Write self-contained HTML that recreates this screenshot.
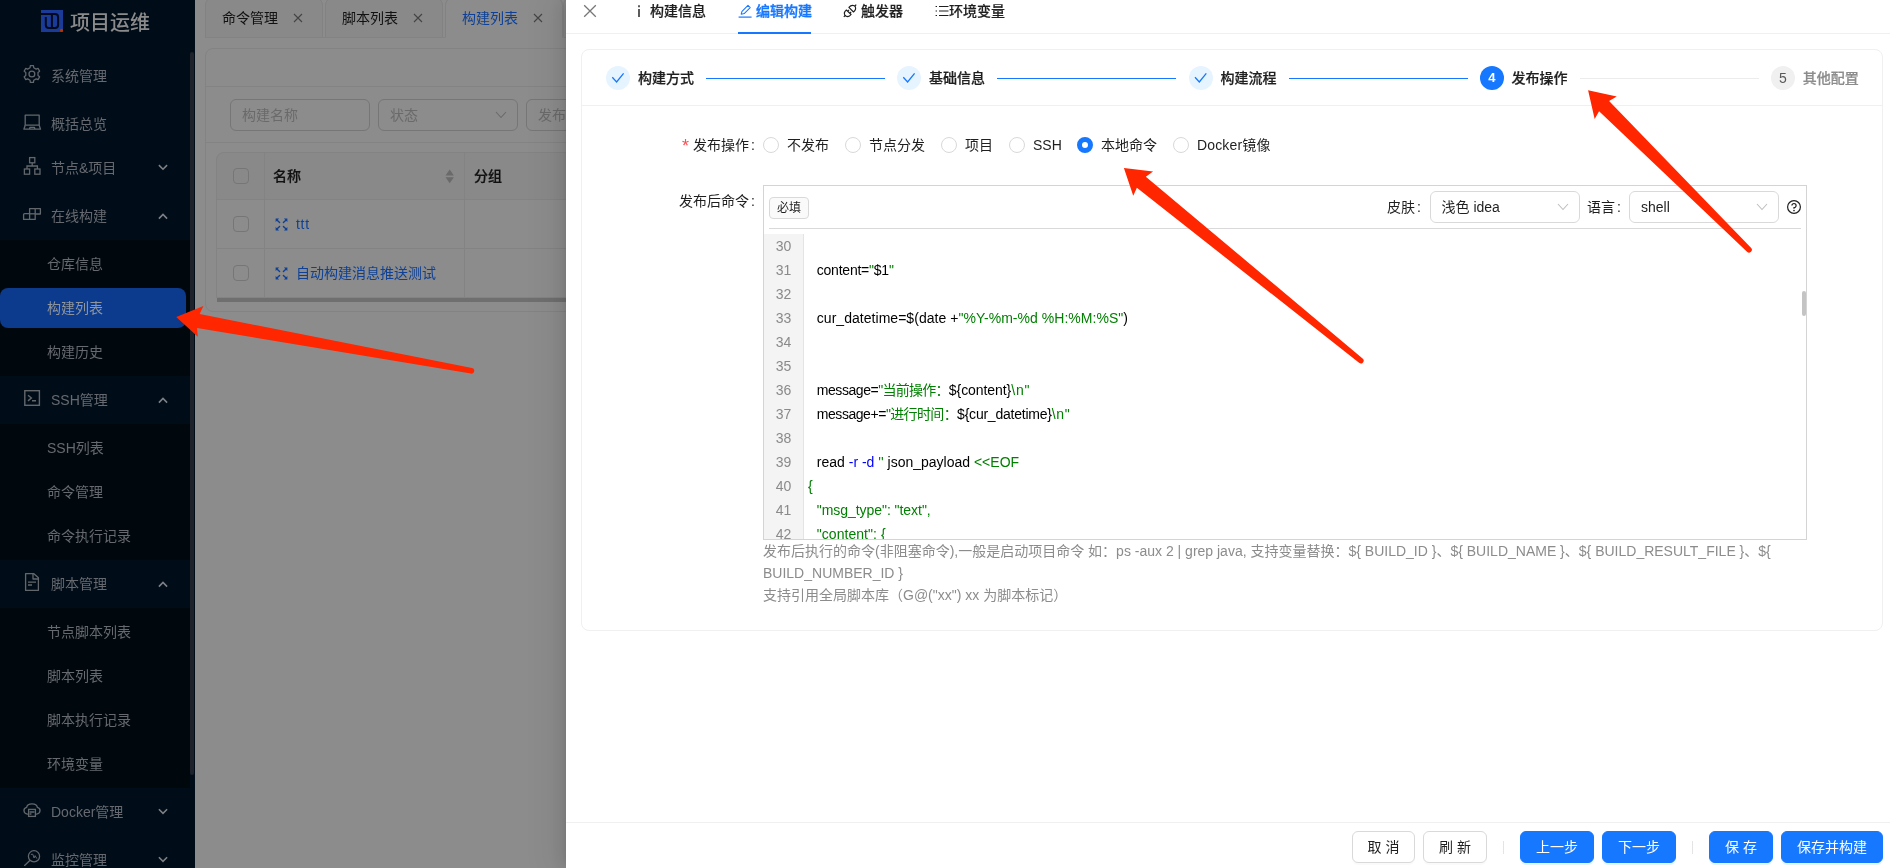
<!DOCTYPE html>
<html lang="zh-CN"><head><meta charset="utf-8"><title>项目运维 - 编辑构建</title>
<style>
*{box-sizing:border-box;margin:0;padding:0}
html,body{width:1890px;height:868px;overflow:hidden;background:#8c8c8c}
body{font-family:"Liberation Sans","Noto Sans CJK SC",sans-serif;font-size:14px;line-height:22px;color:#1f1f1f;position:relative}
.abs{position:absolute}
#side,#main,#drawer{will-change:transform}
#side{position:absolute;left:0;top:0;width:195px;height:868px;background:#000c17;overflow:hidden}
.subbg{position:absolute;left:0;width:190px;background:#00070d}
.sel{position:absolute;left:0;top:288px;width:186px;height:40px;border-radius:8px;background:#0c3a8c}
.mi{position:absolute;white-space:nowrap;color:#666a70;font-size:14px;line-height:22px}
.mi.on{color:#8f959c}
.title{position:absolute;left:70px;top:7.5px;font-size:20px;line-height:30px;font-weight:500;color:#8b8b8b;white-space:nowrap}
.thumb{position:absolute;left:190px;top:52px;width:4px;height:723px;border-radius:2px;background:#1e222a}
#main{position:absolute;left:195px;top:0;width:371px;height:868px;background:#8c8c8c;overflow:hidden;color:#111}
.tab{position:absolute;top:-3px;height:41px;width:118px;border:1px solid #828282;border-radius:8px 8px 0 0;background:#898989;font-size:14px;line-height:22px;white-space:nowrap}
.tab span{position:absolute;left:16px;top:9px}
.tab svg{position:absolute;left:87px;top:15px}
.tab.act{background:#8c8c8c;border-bottom-color:#8c8c8c;color:#0d4096}
.card{position:absolute;left:10px;top:48px;width:400px;height:264px;border:1px solid #838383;border-radius:8px}
.hl{position:absolute;background:#838383;height:1px}
.vl{position:absolute;background:#838383;width:1px}
.inp{position:absolute;top:99px;height:32px;width:140px;border:1px solid #767676;border-radius:6px;color:#6a6a6a;padding:4px 11px;white-space:nowrap;overflow:hidden}
.cb{position:absolute;left:38px;width:16px;height:16px;border:1px solid #767676;border-radius:4px}
.th{position:absolute;font-weight:500;-webkit-text-stroke:0.22px #111;color:#111;white-space:nowrap}
.lnk{position:absolute;color:#0d4096;white-space:nowrap}
#drawer{position:absolute;left:566px;top:0;width:1324px;height:868px;background:#fff;box-shadow:-6px 0 16px rgba(0,0,0,.08),-3px 0 6px -4px rgba(0,0,0,.12),-9px 0 28px 8px rgba(0,0,0,.05)}
#drawer .t{position:absolute;white-space:nowrap}
.dtab{position:absolute;top:0;font-weight:500;-webkit-text-stroke:0.18px currentColor;color:#1f1f1f;white-space:nowrap;line-height:22px}
.step-ic{position:absolute;top:66px;width:24px;height:24px;border-radius:50%;background:#e6f4ff}
.step-t{position:absolute;top:67px;font-weight:500;-webkit-text-stroke:0.22px currentColor;color:#1f1f1f;white-space:nowrap;font-size:14px;line-height:22px}
.radio{position:absolute;top:137px;width:16px;height:16px;border:1px solid #d9d9d9;border-radius:50%;background:#fff}
.rl{position:absolute;top:134px;white-space:nowrap;color:#1f1f1f}
.sel2{position:absolute;top:191px;height:32px;width:150px;border:1px solid #d9d9d9;border-radius:6px;background:#fff;padding:4px 11px;white-space:nowrap}
.ln{position:absolute;left:0;width:39px;text-align:center;height:24px;line-height:24px;color:#8a8a8a;font-size:14px}
.cl{position:absolute;left:0;height:24px;line-height:24px;white-space:pre;color:#000;font-size:14px}
.btn{position:absolute;top:831px;height:32px;border-radius:6px;font-size:14px;line-height:30px;text-align:center;white-space:nowrap}
.btn.d{border:1px solid #d9d9d9;background:#fff;color:#1f1f1f;box-shadow:0 2px 0 rgba(0,0,0,.02)}
.btn.p{border:1px solid #1677ff;background:#1677ff;color:#fff;box-shadow:0 2px 0 rgba(5,145,255,.1)}
</style></head><body>

<div id="side">
<svg class="abs" style="left:41px;top:10px" width="22" height="22" viewBox="0 0 22 22"><rect width="22" height="22.2" fill="#1a3b98"/><path d="M0 3.9 H14 Q17.1 3.9 17.1 7 V14.9 Q17.1 18 14 18 H7.9 Q4.8 18 4.8 14.9 V7" fill="none" stroke="#010a1c" stroke-width="2"/><path d="M10.9 4 V18" stroke="#010a1c" stroke-width="2"/><circle cx="20.5" cy="20.4" r="1.6" fill="#b23505"/></svg>
<div class="title">项目运维</div>
<div class="subbg" style="top:240px;height:136px"></div>
<div class="subbg" style="top:424px;height:136px"></div>
<div class="subbg" style="top:608px;height:180px"></div>
<div class="sel"></div>
<div class="mi" style="top:64.5px;left:51px">系统管理</div>
<div class="mi" style="top:112.5px;left:51px">概括总览</div>
<div class="mi" style="top:156.5px;left:51px">节点&amp;项目</div>
<div class="mi" style="top:204.5px;left:51px">在线构建</div>
<div class="mi" style="top:388.5px;left:51px">SSH管理</div>
<div class="mi" style="top:572.5px;left:51px">脚本管理</div>
<div class="mi" style="top:800.5px;left:51px">Docker管理</div>
<div class="mi" style="top:848.5px;left:51px">监控管理</div>
<div class="mi" style="top:252.5px;left:47px">仓库信息</div>
<div class="mi on" style="top:296.5px;left:47px">构建列表</div>
<div class="mi" style="top:340.5px;left:47px">构建历史</div>
<div class="mi" style="top:436.5px;left:47px">SSH列表</div>
<div class="mi" style="top:480.5px;left:47px">命令管理</div>
<div class="mi" style="top:524.5px;left:47px">命令执行记录</div>
<div class="mi" style="top:620.5px;left:47px">节点脚本列表</div>
<div class="mi" style="top:664.5px;left:47px">脚本列表</div>
<div class="mi" style="top:708.5px;left:47px">脚本执行记录</div>
<div class="mi" style="top:752.5px;left:47px">环境变量</div>
<svg class="abs" style="left:0;top:0" width="195" height="868" viewBox="0 0 195 868"><path d="M29.97 67.69 L30.26 65.56 L33.54 65.56 L33.83 67.69 L36.40 69.17 L38.39 68.36 L40.03 71.20 L38.33 72.52 L38.33 75.48 L40.03 76.80 L38.39 79.64 L36.40 78.83 L33.83 80.31 L33.54 82.44 L30.26 82.44 L29.97 80.31 L27.40 78.83 L25.41 79.64 L23.77 76.80 L25.47 75.48 L25.47 72.52 L23.77 71.20 L25.41 68.36 L27.40 69.17Z" fill="none" stroke="#62676c" stroke-width="1.3" stroke-linejoin="round" transform="translate(31.9 0) scale(0.95 1) translate(-31.9 0)"/><circle cx="31.9" cy="74.0" r="2.9" fill="none" stroke="#62676c" stroke-width="1.3"/><g fill="none" stroke="#62676c" stroke-width="1.3" stroke-linejoin="round"><rect x="25.2" y="115.2" width="14" height="10"/><path d="M25.2 125.2 L23.9 129.2 H40.5 L39.2 125.2 M29.5 129 L30 127.3 H34.4 L34.9 129"/></g><g fill="none" stroke="#62676c" stroke-width="1.3"><rect x="29.6" y="157.6" width="5.2" height="5.2"/><rect x="24.4" y="169" width="5.2" height="5.2"/><rect x="34.8" y="169" width="5.2" height="5.2"/><path d="M32.2 162.8 V166 M27 169 V166 H37.4 V169"/></g><g fill="none" stroke="#62676c" stroke-width="1.3" stroke-linejoin="round"><path d="M29.6 213.6 H24.6 Q23.6 213.6 23.6 214.6 V219.4 H29.6"/><rect x="29.6" y="208.6" width="5.6" height="10.8"/><path d="M29.6 213.8 H35.2"/><path d="M35.2 208.6 H40.4 V214 H35.2"/></g><g fill="none" stroke="#62676c" stroke-width="1.4"><rect x="24.8" y="390.7" width="14.6" height="14.6"/><path d="M28 395.2 L31.4 398 L28 400.9 M32 400.8 H36"/></g><g fill="none" stroke="#62676c" stroke-width="1.3" stroke-linejoin="round"><path d="M25.6 573.6 H33.6 L38.4 577.8 V590.4 H25.6 Z"/><path d="M33 574 V579 H38"/><path d="M28 582.2 H36 M28 585 H32"/></g><g fill="none" stroke="#62676c" stroke-width="1.3" stroke-linecap="round"><path d="M27.4 814.2 C23.4 813.6 22.6 808.6 26.6 807.4 C27.4 802.6 36.6 802.6 37.4 807.4 C41.4 808.6 40.6 813.6 36.6 814.2"/><rect x="28.6" y="809.4" width="6.8" height="7"/><path d="M30 812 H34 M30 814 H31"/></g><g fill="none" stroke="#62676c" stroke-width="1.3" stroke-linecap="round"><circle cx="34" cy="856.3" r="5.6"/><path d="M29.8 860.6 L24.6 865.4"/><path d="M31.3 854.4 L32.8 854.2 L34.1 858 L35.1 855.6 L36.6 858.2" stroke-width="1"/></g><path d="M158.9 165.1 L163 169.2 L167.1 165.1" fill="none" stroke="#7d8186" stroke-width="1.6"/><path d="M158.9 218.6 L163 214.5 L167.1 218.6" fill="none" stroke="#7d8186" stroke-width="1.6"/><path d="M158.9 402.6 L163 398.5 L167.1 402.6" fill="none" stroke="#7d8186" stroke-width="1.6"/><path d="M158.9 586.6 L163 582.5 L167.1 586.6" fill="none" stroke="#7d8186" stroke-width="1.6"/><path d="M158.9 809.1999999999999 L163 813.3 L167.1 809.1999999999999" fill="none" stroke="#7d8186" stroke-width="1.6"/><path d="M158.9 857.1999999999999 L163 861.3 L167.1 857.1999999999999" fill="none" stroke="#7d8186" stroke-width="1.6"/></svg>
<div class="thumb"></div>
</div>

<div id="main">
 <div class="tab" style="left:10px"><span>命令管理</span><svg width="10" height="10" viewBox="0 0 10 10"><path d="M1 1L9 9M9 1L1 9" stroke="#444" stroke-width="1.1"/></svg></div>
 <div class="tab" style="left:130px"><span>脚本列表</span><svg width="10" height="10" viewBox="0 0 10 10"><path d="M1 1L9 9M9 1L1 9" stroke="#444" stroke-width="1.1"/></svg></div>
 <div class="tab act" style="left:250px"><span>构建列表</span><svg width="10" height="10" viewBox="0 0 10 10"><path d="M1 1L9 9M9 1L1 9" stroke="#444" stroke-width="1.1"/></svg></div>
 <div class="tab" style="left:368px"></div>
 <div class="hl" style="left:10px;top:37px;width:240px"></div>
 <div class="card"></div>
 <div class="hl" style="left:11px;top:86px;width:360px"></div>
 <div class="inp" style="left:35px">构建名称</div>
 <div class="inp" style="left:183px">状态<svg class="abs" style="left:116px;top:11px" width="12" height="8" viewBox="0 0 12 8"><path d="M1 1L6 6.5L11 1" fill="none" stroke="#6a6a6a" stroke-width="1.1"/></svg></div>
 <div class="inp" style="left:331px">发布</div>
 <div class="hl" style="left:11px;top:142px;width:360px"></div>
 <div class="abs" style="left:21px;top:152px;width:360px;height:47px;background:#898989;border-top-left-radius:8px"></div>
 <div class="abs" style="left:21px;top:152px;width:360px;height:146px;border:1px solid #838383;border-radius:8px 0 0 0"></div>
 <div class="hl" style="left:21px;top:199px;width:360px"></div>
 <div class="hl" style="left:21px;top:248px;width:360px"></div>
 <div class="vl" style="left:69px;top:152px;height:145px"></div>
 <div class="vl" style="left:269px;top:152px;height:145px"></div>
 <div class="abs" style="left:22px;top:298px;width:360px;height:4px;background:#6f6f6f"></div>
 <div class="cb" style="top:168px"></div><div class="cb" style="top:216px"></div><div class="cb" style="top:265px"></div>
 <div class="th" style="left:78px;top:165px">名称</div>
 <div class="th" style="left:279px;top:165px">分组</div>
 <svg class="abs" style="left:250px;top:169px" width="10" height="15" viewBox="0 0 10 15"><path d="M4.7 0.4L8.9 6.4H0.5Z M4.7 14.2L8.9 8.2H0.5Z" fill="#6a6a6a"/></svg>
 <svg class="abs" style="left:79.5px;top:217.5px" width="13" height="13" viewBox="0 0 13 13"><g fill="#0d4096" stroke="#0d4096"><path d="M0.6 0.6 L4.1 0.6 L0.6 4.1Z" stroke="none"/><path d="M4.6 4.6 L1.9 1.9" stroke-width="1.35" stroke-linecap="round" fill="none"/><path d="M0.6 12.4 L4.1 12.4 L0.6 8.9Z" stroke="none"/><path d="M4.6 8.4 L1.9 11.1" stroke-width="1.35" stroke-linecap="round" fill="none"/><path d="M12.4 0.6 L8.9 0.6 L12.4 4.1Z" stroke="none"/><path d="M8.4 4.6 L11.1 1.9" stroke-width="1.35" stroke-linecap="round" fill="none"/><path d="M12.4 12.4 L8.9 12.4 L12.4 8.9Z" stroke="none"/><path d="M8.4 8.4 L11.1 11.1" stroke-width="1.35" stroke-linecap="round" fill="none"/></g></svg>
 <svg class="abs" style="left:79.5px;top:266.5px" width="13" height="13" viewBox="0 0 13 13"><g fill="#0d4096" stroke="#0d4096"><path d="M0.6 0.6 L4.1 0.6 L0.6 4.1Z" stroke="none"/><path d="M4.6 4.6 L1.9 1.9" stroke-width="1.35" stroke-linecap="round" fill="none"/><path d="M0.6 12.4 L4.1 12.4 L0.6 8.9Z" stroke="none"/><path d="M4.6 8.4 L1.9 11.1" stroke-width="1.35" stroke-linecap="round" fill="none"/><path d="M12.4 0.6 L8.9 0.6 L12.4 4.1Z" stroke="none"/><path d="M8.4 4.6 L11.1 1.9" stroke-width="1.35" stroke-linecap="round" fill="none"/><path d="M12.4 12.4 L8.9 12.4 L12.4 8.9Z" stroke="none"/><path d="M8.4 8.4 L11.1 11.1" stroke-width="1.35" stroke-linecap="round" fill="none"/></g></svg>
 <div class="lnk" style="left:101px;top:213px;letter-spacing:0.7px">ttt</div>
 <div class="lnk" style="left:101px;top:262px">自动构建消息推送测试</div>
</div>

<div id="drawer">
 <svg class="abs" style="left:17px;top:4px" width="14" height="14" viewBox="0 0 14 14"><path d="M1.2 1.2L12.8 12.8M12.8 1.2L1.2 12.8" stroke="#777" stroke-width="1.3"/></svg>
 <div class="hl" style="left:0;top:33px;width:1324px;background:#f0f0f0"></div>
 <div class="dtab" style="left:84px">构建信息</div>
 <div class="dtab" style="left:190px;color:#1677ff;-webkit-text-stroke:0.3px #1677ff">编辑构建</div>
 <div class="dtab" style="left:295px">触发器</div>
 <div class="dtab" style="left:383px">环境变量</div>
 <div class="abs" style="left:172px;top:32px;width:73px;height:2px;background:#1677ff"></div>
 <svg class="abs" style="left:60px;top:0" width="400" height="24" viewBox="0 0 400 24">
  <path d="M13 5.3V7.2M13 8.9V17" stroke="#1f1f1f" stroke-width="1.45"/>
  <g fill="none" stroke="#1677ff" stroke-width="1.05" stroke-linejoin="round"><path d="M115.2 14.2L116 11.4L122 5.4L124.2 7.6L118.2 13.6Z"/><path d="M112.6 17.1H125.6" stroke-width="1.2"/></g>
  <g transform="translate(210,0)" fill="none" stroke="#1f1f1f" stroke-width="1.15" stroke-linejoin="round"><path d="M12.9 7.4L17.5 12Q20.6 9.6 19.2 6.6L18.4 5.8Q15.4 4.4 12.9 7.4Z"/><path d="M18.9 6L20.2 4.7"/><path d="M10.4 10L15.1 14.5Q12.8 17.6 9.8 16L8.9 15.1Q7.3 12.4 10.4 10Z"/><path d="M9.2 15.5L7.8 16.9M12 10.9L13 9.9M14.1 13L15.1 12"/></g>
  <g stroke="#1f1f1f" stroke-width="1.2"><path d="M313 6.5H322.5M313 11H322.5M313 15.5H322.5"/><path d="M309.6 6.5H311M309.6 11H311M309.6 15.5H311"/></g>
 </svg>

 <div class="abs" style="left:15px;top:49px;width:1302px;height:582px;border:1px solid #f0f0f0;border-radius:8px"></div>
 <div class="hl" style="left:16px;top:105px;width:1300px;background:#f0f0f0"></div>

 <div class="step-ic" style="left:40px"></div><div class="step-ic" style="left:331px"></div><div class="step-ic" style="left:622.7px"></div>
 <div class="step-ic" style="left:913.8px;background:#1677ff;color:#fff;text-align:center;font-size:13px;line-height:24px;font-weight:bold">4</div>
 <div class="step-ic" style="left:1204.8px;background:#f0f0f0;color:#595959;text-align:center;font-size:14px;line-height:24px">5</div>
 <svg class="abs" style="left:40px;top:66px" width="620" height="24" viewBox="0 0 620 24"><g fill="none" stroke="#1677ff" stroke-width="1.3"><path d="M6.3 11.3L10.6 15.9L17.6 7.3"/><path d="M297.3 11.3L301.6 15.9L308.6 7.3"/><path d="M589 11.3L593.3 15.9L600.3 7.3"/></g></svg>
 <div class="step-t" style="left:72px">构建方式</div>
 <div class="step-t" style="left:363px">基础信息</div>
 <div class="step-t" style="left:654.6px">构建流程</div>
 <div class="step-t" style="left:945.5px">发布操作</div>
 <div class="step-t" style="left:1236.8px;color:#8c8c8c">其他配置</div>
 <div class="hl" style="left:140px;top:78px;width:179px;background:#1677ff"></div>
 <div class="hl" style="left:431px;top:78px;width:179px;background:#1677ff"></div>
 <div class="hl" style="left:723px;top:78px;width:179px;background:#1677ff"></div>
 <div class="hl" style="left:1014px;top:78px;width:179px;background:#ececec"></div>

 <div class="t" style="left:116.1px;top:135.3px;font-size:18px;line-height:22px"><span style="color:#ff4d4f;font-family:'Liberation Sans',sans-serif">*</span></div>
 <div class="t" style="left:127px;top:134px">发布操作<span style="margin-left:2px">:</span></div>
 <div class="radio" style="left:197px"></div><div class="rl" style="left:221px">不发布</div>
 <div class="radio" style="left:279px"></div><div class="rl" style="left:303px">节点分发</div>
 <div class="radio" style="left:375px"></div><div class="rl" style="left:399px">项目</div>
 <div class="radio" style="left:443px"></div><div class="rl" style="left:467px">SSH</div>
 <div class="radio" style="left:511px;border:5px solid #1677ff"></div><div class="rl" style="left:535px">本地命令</div>
 <div class="radio" style="left:607px"></div><div class="rl" style="left:631px;letter-spacing:0.15px">Docker镜像</div>

 <div class="t" style="left:113px;top:190px">发布后命令<span style="margin-left:2px">:</span></div>
 <div class="abs" style="left:197px;top:185px;width:1044px;height:355px;border:1px solid #d4d4d4;overflow:hidden">
   <div class="abs" style="left:5px;top:10.5px;width:40px;height:22px;border:1px solid #d9d9d9;border-radius:4px;background:#fafafa;font-size:12px;line-height:20px;text-align:center;color:#1f1f1f">必填</div>
   <div class="hl" style="left:5px;top:42px;width:1032px;background:#d9d9d9"></div>
   <div class="abs" style="left:0;top:48px;width:40px;height:310px;background:#f4f4f4;border-right:1px solid #e4e4e4"><div class="ln" style="top:0px">30</div><div class="ln" style="top:24px">31</div><div class="ln" style="top:48px">32</div><div class="ln" style="top:72px">33</div><div class="ln" style="top:96px">34</div><div class="ln" style="top:120px">35</div><div class="ln" style="top:144px">36</div><div class="ln" style="top:168px">37</div><div class="ln" style="top:192px">38</div><div class="ln" style="top:216px">39</div><div class="ln" style="top:240px">40</div><div class="ln" style="top:264px">41</div><div class="ln" style="top:288px">42</div></div>
   <div class="abs" style="left:44px;top:48px;width:990px;height:310px"><div class="cl" style="top:24px;left:8.8px"><span style="letter-spacing:-0.23px;">content=</span><span style="letter-spacing:-0.23px;color:#008000;">"</span><span style="letter-spacing:-0.23px;">$1</span><span style="color:#008000;">"</span></div><div class="cl" style="top:72px;left:8.8px"><span style="letter-spacing:0.035px;">cur_datetime=$(date +</span><span style="letter-spacing:0.035px;color:#008000;">"%Y-%m-%d %H:%M:%S"</span>)</div><div class="cl" style="top:144px;left:8.8px"><span style="letter-spacing:-0.44px;">message=</span><span style="letter-spacing:-0.73px;color:#008000;">"当前操作：</span><span style="letter-spacing:-0.07px;">${content}</span><span style="letter-spacing:0.8px;color:#008000;">\n"</span></div><div class="cl" style="top:168px;left:8.8px"><span style="letter-spacing:-0.45px;">message+=</span><span style="letter-spacing:-0.63px;color:#008000;">"进行时间：</span><span style="letter-spacing:-0.23px;">${cur_datetime}</span><span style="letter-spacing:0.7px;color:#008000;">\n"</span></div><div class="cl" style="top:216px;left:8.8px">read <span style="color:#0000ff;">-r</span> <span style="color:#0000ff;">-d</span> <span style="color:#008000;">''</span> json_payload <span style="color:#008000;">&lt;&lt;EOF</span></div><div class="cl" style="top:240px;left:0px"><span style="color:#008000;">{</span></div><div class="cl" style="top:264px;left:8.8px"><span style="letter-spacing:-0.05px;color:#008000;">"msg_type": "text",</span></div><div class="cl" style="top:288px;left:8.8px"><span style="letter-spacing:0.04px;color:#008000;">"content": {</span></div></div>
   <div class="abs" style="left:1038px;top:105px;width:4px;height:25px;border-radius:2px;background:#c4c4c4"></div>
 </div>
 <div class="t" style="left:821px;top:196px">皮肤<span style="margin-left:2px">:</span></div>
 <div class="sel2" style="left:863.5px">浅色 idea<svg class="abs" style="left:126px;top:11px" width="12" height="8" viewBox="0 0 12 8"><path d="M1 1L6 6.5L11 1" fill="none" stroke="#bfbfbf" stroke-width="1.1"/></svg></div>
 <div class="t" style="left:1021px;top:196px">语言<span style="margin-left:2px">:</span></div>
 <div class="sel2" style="left:1063px">shell<svg class="abs" style="left:126px;top:11px" width="12" height="8" viewBox="0 0 12 8"><path d="M1 1L6 6.5L11 1" fill="none" stroke="#bfbfbf" stroke-width="1.1"/></svg></div>
 <svg class="abs" style="left:1220px;top:199px" width="16" height="16" viewBox="0 0 16 16"><circle cx="8" cy="8" r="6.4" fill="none" stroke="#1f1f1f" stroke-width="1.2"/><path d="M5.9 6.6A2.1 2.1 0 1 1 8 8.7V9.8" fill="none" stroke="#1f1f1f" stroke-width="1.2"/><circle cx="8" cy="11.6" r="0.8" fill="#1f1f1f"/></svg>

 <div class="t" style="left:197px;top:540px;color:#8c8c8c">发布后执行的命令(非阻塞命令),一般是启动项目命令 如：ps -aux 2 | grep java, 支持变量替换：${ BUILD_ID }、${ BUILD_NAME }、${ BUILD_RESULT_FILE }、${</div>
 <div class="t" style="left:197px;top:562px;color:#8c8c8c">BUILD_NUMBER_ID }</div>
 <div class="t" style="left:197px;top:584px;color:#8c8c8c">支持引用全局脚本库（G@("xx") xx 为脚本标记）</div>

 <div class="hl" style="left:0;top:822px;width:1324px;background:#f0f0f0"></div>
 <div class="btn d" style="left:786px;width:63px">取 消</div>
 <div class="btn d" style="left:857px;width:64px">刷 新</div>
 <div class="vl" style="left:937px;top:841px;height:13px;background:#e4e4e4"></div>
 <div class="btn p" style="left:954px;width:74px">上一步</div>
 <div class="btn p" style="left:1036px;width:74px">下一步</div>
 <div class="vl" style="left:1126px;top:841px;height:13px;background:#e4e4e4"></div>
 <div class="btn p" style="left:1143px;width:64px">保 存</div>
 <div class="btn p" style="left:1215px;width:102px">保存并构建</div>
</div>

<svg class="abs" style="left:0;top:0;pointer-events:none" width="1890" height="868" viewBox="0 0 1890 868"><path d="M176.20 316.90 L197.78 336.80 L197.06 327.93 L470.94 373.55 A2.80 2.80 0 0 0 471.95 368.04 L199.61 313.96 L203.42 305.91 Z" fill="#ff2600"/><path d="M1123.90 168.00 L1133.24 195.83 L1136.88 187.70 L1359.06 362.81 A2.80 2.80 0 0 0 1362.59 358.46 L1145.84 176.69 L1153.05 171.46 Z" fill="#ff2600"/><path d="M1588.10 90.30 L1594.66 118.91 L1599.08 111.18 L1747.04 251.82 A2.80 2.80 0 0 0 1750.98 247.84 L1609.08 101.10 L1616.77 96.61 Z" fill="#ff2600"/></svg>
</body></html>
